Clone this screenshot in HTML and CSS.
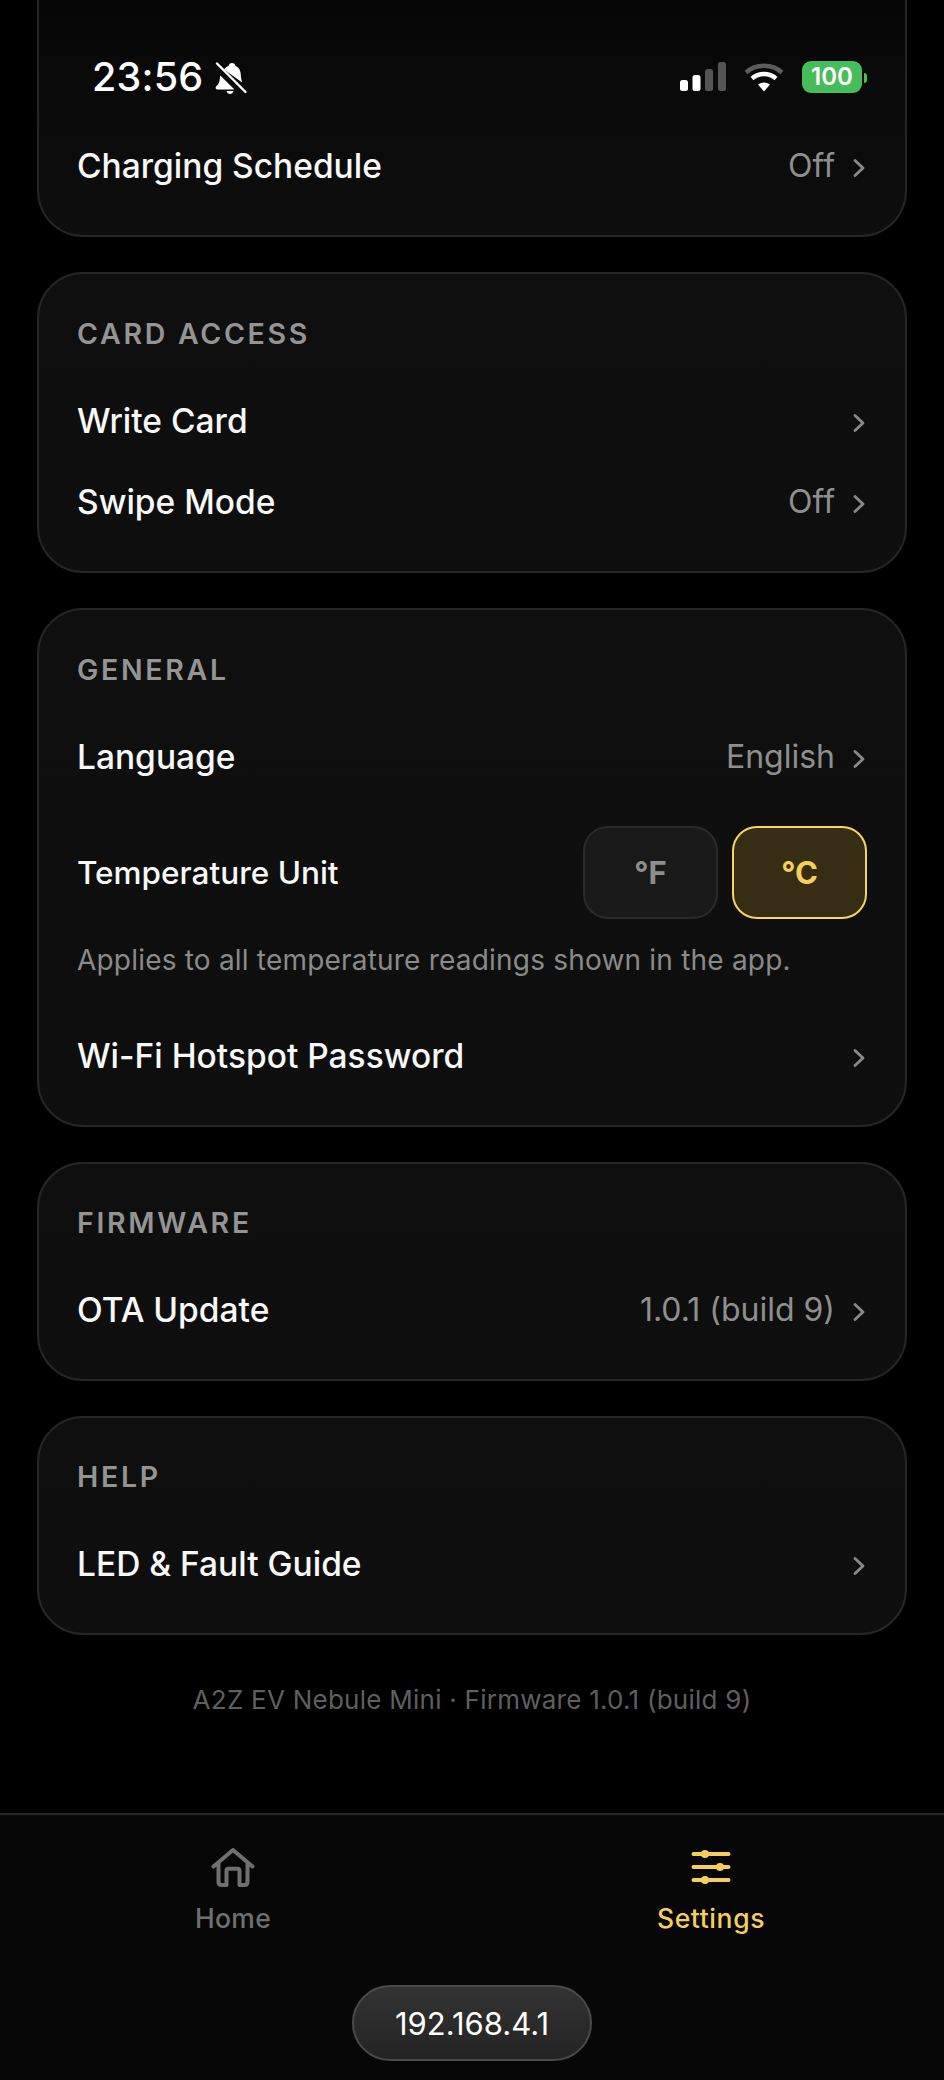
FILE: index.html
```html
<!DOCTYPE html>
<html lang="en">
<head>
<meta charset="utf-8">
<title>Settings</title>
<link rel="stylesheet" href="styles.css">
</head>
<body>
<div class="app">
  <main class="content">
    <section class="card card-cut">
      <div class="row row-first"><span class="label">Charging Schedule</span><span class="meta"><span class="value">Off</span><svg class="chev" width="12" height="20" viewBox="0 0 12 20"><use href="#chevron"/></svg></span></div>
    </section>

    <section class="card">
      <h2 class="title">CARD ACCESS</h2>
      <div class="row row-a"><span class="label">Write Card</span><span class="meta"><svg class="chev" width="12" height="20" viewBox="0 0 12 20"><use href="#chevron"/></svg></span></div>
      <div class="row row-b"><span class="label">Swipe Mode</span><span class="meta"><span class="value">Off</span><svg class="chev" width="12" height="20" viewBox="0 0 12 20"><use href="#chevron"/></svg></span></div>
    </section>

    <section class="card">
      <h2 class="title">GENERAL</h2>
      <div class="row row-a"><span class="label">Language</span><span class="meta"><span class="value">English</span><svg class="chev" width="12" height="20" viewBox="0 0 12 20"><use href="#chevron"/></svg></span></div>
      <div class="row-temp">
        <span class="label label-sm">Temperature Unit</span>
        <div class="units"><span class="unit">°F</span><span class="unit unit-on">°C</span></div>
      </div>
      <p class="hint">Applies to all temperature readings shown in the app.</p>
      <div class="row row-wifi"><span class="label">Wi-Fi Hotspot Password</span><span class="meta"><svg class="chev" width="12" height="20" viewBox="0 0 12 20"><use href="#chevron"/></svg></span></div>
    </section>

    <section class="card card-single">
      <h2 class="title">FIRMWARE</h2>
      <div class="row row-a"><span class="label">OTA Update</span><span class="meta"><span class="value">1.0.1 (build 9)</span><svg class="chev" width="12" height="20" viewBox="0 0 12 20"><use href="#chevron"/></svg></span></div>
    </section>

    <section class="card card-single">
      <h2 class="title">HELP</h2>
      <div class="row row-a"><span class="label">LED &amp; Fault Guide</span><span class="meta"><svg class="chev" width="12" height="20" viewBox="0 0 12 20"><use href="#chevron"/></svg></span></div>
    </section>

    <p class="foot">A2Z EV Nebule Mini · Firmware 1.0.1 (build 9)</p>
  </main>

  <nav class="nav">
    <div class="tabs">
      <div class="tab tab-home">
        <svg width="44" height="42" viewBox="0 0 44 42"><path fill="none" stroke="#707070" stroke-width="4" stroke-linecap="round" stroke-linejoin="round" d="M2.500 18.500L22 2l19.500 16.500M7.500 15V34c0 2 1 3 3 3h5V23c0-1.500.8-2.200 2-2.200h9c1.200 0 2 .7 2 2.200v14h5c2 0 3-1 3-3V15"/></svg>
        <span class="tab-label">Home</span>
      </div>
      <div class="tab tab-on">
        <svg width="40" height="36" viewBox="0 0 40 36"><g stroke="#f5cf5b" stroke-width="4" stroke-linecap="round"><path d="M2.500 3h35M2.500 16h35M2.500 29h35"/></g><g fill="#f5cf5b"><circle cx="14" cy="3" r="4"/><circle cx="29" cy="16" r="4"/><circle cx="14" cy="29" r="4"/></g></svg>
        <span class="tab-label">Settings</span>
      </div>
    </div>
    <div class="pill">192.168.4.1</div>
  </nav>

  <div class="status">
    <div class="status-left">
      <span class="clock">23:56</span>
      <svg class="bell" width="32" height="32" viewBox="0 0 32 32"><path fill="#fff" d="M1 24.500c2.500-2.200 3.500-4 3.800-7.500.1-1.300.2-2.500.5-3.500L19.500 27.500H2.500c-1.500 0-2.500-1.900-1.500-3zM9 7.500c1.300-1.800 3-3 4.500-3.500C14 2 15 1 17 1s3 1 3.500 3c3.500 1.200 5 4.500 5.300 8.500.1 2.500.6 5.500 1.400 8z"/><path fill="#fff" d="M11.500 29h7c-.5 2-1.800 3-3.500 3s-3-1-3.500-3z"/><path stroke="#0c0c0c" stroke-width="1.800" d="M0 3.800l27.500 27.500"/><path stroke="#fff" stroke-width="2.400" stroke-linecap="round" d="M2 1.500l28.500 28.500"/></svg>
    </div>
    <div class="status-right">
      <svg width="46" height="29" viewBox="0 0 46 29"><rect x="0" y="18" width="8" height="11" rx="2.500" fill="#fff"/><rect x="12.500" y="13" width="8" height="16" rx="2.500" fill="#fff"/><rect x="25" y="7" width="8" height="22" rx="2.500" fill="#555"/><rect x="38" y="0" width="8" height="29" rx="2.500" fill="#555"/></svg>
      <svg class="wifi" width="40" height="30" viewBox="0 0 40 30"><path fill="none" stroke="#5c5c5c" stroke-width="4.500" d="M2 10.500C12 1.500 28 1.500 38 10.500"/><path fill="none" stroke="#fff" stroke-width="4.500" d="M8 16.500c7-6 17-6 24 0"/><path fill="#fff" d="M14 22.500c3.500-2.800 8.500-2.800 12 0l-6 7z"/></svg>
      <div class="battery"><span class="batt-body">100</span><span class="batt-tip"></span></div>
    </div>
  </div>
</div>
<svg class="defs" width="0" height="0"><defs><path id="chevron" fill="none" stroke="#8a8a8a" stroke-width="2.800" stroke-linecap="round" stroke-linejoin="round" d="M2 2.500L10 10l-8 7.500"/></defs></svg>
</body>
</html>
```
FILE: styles.css
```css
* { box-sizing: border-box; }
html, body { margin: 0; padding: 0; background: #000; }
body { font-family: Inter, "Liberation Sans", sans-serif; color: #fff; }
.app { position: relative; width: 944px; height: 2080px; overflow: hidden; display: flex; flex-direction: column; background: #000; }

.status { position: absolute; top: 0; left: 0; right: 0; padding: 54px 77px 0 92px; display: flex; justify-content: space-between; align-items: flex-start; }
.status-left { display: flex; align-items: center; gap: 12px; }
.clock { font-size: 39.500px; font-weight: 500; line-height: 46px; letter-spacing: .2px; color: #fff; }
.bell { display: block; margin-top: 1px; }
.status-right { display: flex; align-items: flex-start; margin-top: 8px; }
.status-right .wifi { margin: 0 0 0 18px; }
.battery { display: flex; align-items: center; margin-left: 18px; }
.batt-body { display: block; width: 60px; height: 32px; margin-top: -1px; border-radius: 9px; background: #46bd5b; color: #fff; font-size: 24px; font-weight: 600; line-height: 32px; text-align: center; }
.batt-tip { display: block; width: 3px; height: 10px; margin-left: 2px; background: #46bd5b; border-radius: 0 3px 3px 0; }

.content { flex: 1; display: flex; flex-direction: column; gap: 35px; padding: 0 37px; min-height: 0; }
.card { background: linear-gradient(#0f0f0f, #0e0e0e); border: 2px solid #262626; border-radius: 46px; padding: 44px 38px 0; }
.card-single { padding-top: 43px; }
.card-cut { height: 237px; border-top: 0; border-radius: 0 0 46px 46px; background: linear-gradient(#060606, #0a0a0a 40%, #0e0e0e); padding-top: 146px; flex: none; }
.title { margin: 0; font-size: 28.500px; line-height: 32px; font-weight: 600; letter-spacing: 2.700px; color: #949494; }

.row { display: flex; justify-content: space-between; align-items: center; height: 40px; }
.row-a { margin-top: 51px; margin-bottom: 49px; }
.row-b { margin-top: -8px; margin-bottom: 49px; }
.row-wifi { margin-top: 0; margin-bottom: 49px; }
.label { font-size: 33.500px; font-weight: 500; line-height: 40px; color: #f8f8f8; }
.label-sm { font-size: 31.500px; }
.meta { display: flex; align-items: center; gap: 18px; margin-right: 2px; }
.value { font-size: 32px; font-weight: 400; line-height: 40px; color: #8f8f8f; }
.chev { display: block; margin-top: 4px; }

.row-temp { display: flex; justify-content: space-between; align-items: center; margin-top: 1px; }
.units { display: flex; gap: 14px; }
.unit { width: 135px; height: 93px; border-radius: 25px; border: 2px solid #2a2a2a; background: #191919; display: flex; align-items: center; justify-content: center; font-size: 31px; font-weight: 700; color: #8e8e8e; }
.unit-on { background: #362d14; border-color: #f5d565; color: #f5d05a; }
.hint { margin: 23px 0 58px; font-size: 28px; line-height: 36px; letter-spacing: .2px; color: #8a8a8a; }

.foot { margin: 14px 0 0; text-align: center; font-size: 26px; line-height: 32px; color: #5f5f5f; letter-spacing: .25px; }

.nav { flex: none; height: 267px; border-top: 2px solid #262626; background: #070707; display: flex; flex-direction: column; align-items: center; }
.tabs { width: 100%; display: flex; justify-content: space-between; padding: 33px 0 0; height: 170px; }
.tab { display: flex; flex-direction: column; align-items: center; color: #707070; }
.tab-home { width: 466px; }
.tab svg { display: block; height: 42px; }
.tab-label { font-size: 26.500px; font-weight: 500; line-height: 34px; margin-top: 11px; letter-spacing: .3px; }
.tab-on { color: #f5cf5b; width: 466px; }
.tab-on .tab-label { letter-spacing: .6px; }
.pill { width: 240px; height: 76px; border-radius: 38px; border: 2px solid #4a4a4a; background: linear-gradient(#333, #232323); display: flex; align-items: center; justify-content: center; font-size: 31px; font-weight: 400; color: #fff; }
.defs { position: absolute; }
```
